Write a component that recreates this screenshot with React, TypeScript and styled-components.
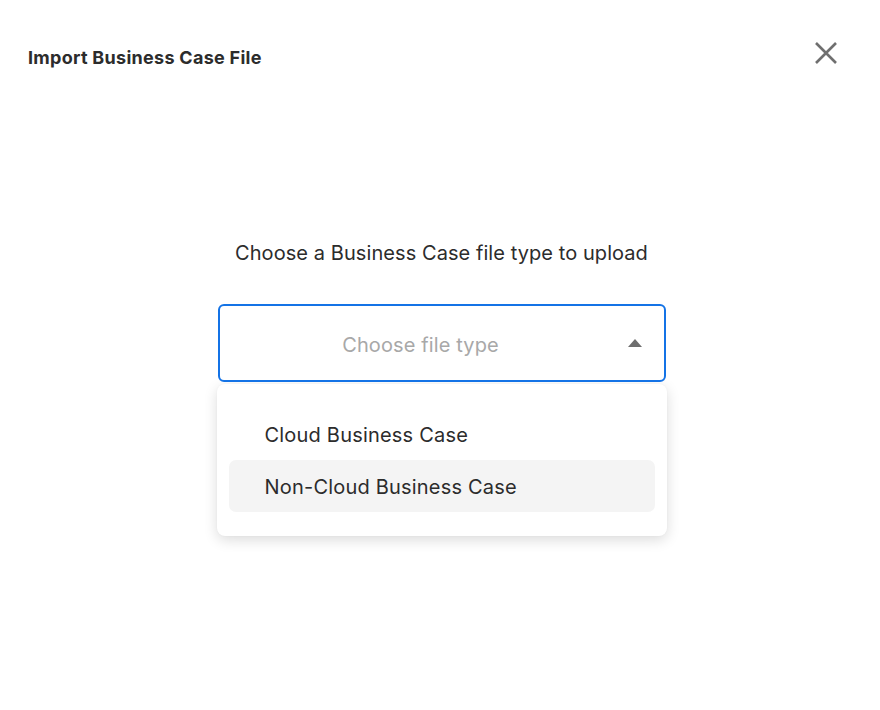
import React from "react";
import styled, { createGlobalStyle } from "styled-components";

const Global = createGlobalStyle`
  html, body {
    margin: 0;
    padding: 0;
    background: #ffffff;
  }
  body {
    font-family: Inter, "Noto Sans", sans-serif;
    color: #2c2c2c;
  }
`;

const Dialog = styled.div`
  width: 880px;
  height: 710px;
  box-sizing: border-box;
  display: flex;
  flex-direction: column;
  padding: 38px 40px 0 28px;
`;

const Header = styled.div`
  display: flex;
  align-items: center;
  justify-content: space-between;
  height: 38px;
`;

const Title = styled.h1`
  margin: 0;
  font-size: 18px;
  font-weight: 700;
  color: #2c2c2c;
  letter-spacing: 0.28px;
`;

const CloseButton = styled.button`
  border: none;
  background: none;
  padding: 0;
  width: 26px;
  height: 26px;
  display: flex;
  align-items: center;
  justify-content: center;
  cursor: pointer;
  margin-top: -8px;
  margin-right: 1px;
`;

const Body = styled.div`
  display: flex;
  flex-direction: column;
  align-items: center;
  padding-top: 163px;
  margin-left: 15px;
`;

const Prompt = styled.p`
  margin: 0;
  font-size: 20px;
  line-height: 28px;
  color: #2c2c2c;
  letter-spacing: 0.07px;
`;

const SelectWrap = styled.div`
  position: relative;
  margin-top: 37px;
  width: 450px;
`;

const SelectBox = styled.div`
  box-sizing: border-box;
  width: 448px;
  height: 78px;
  margin-left: 1px;
  border: 2px solid #1473e6;
  border-radius: 6px;
  display: flex;
  align-items: center;
  justify-content: center;
  position: relative;
  background: #fff;
`;

const Placeholder = styled.span`
  font-size: 20px;
  color: #a8a8a8;
  margin-left: -42px;
  padding-top: 3px;
  letter-spacing: 0.12px;
`;

const Caret = styled.span`
  position: absolute;
  right: 22px;
  top: 33px;
  width: 0;
  height: 0;
  border-left: 7px solid transparent;
  border-right: 7px solid transparent;
  border-bottom: 8px solid #6e6e6e;
`;

const Menu = styled.ul`
  list-style: none;
  margin: 2px 0 0 0;
  padding: 24px 12px 24px 12px;
  width: 450px;
  box-sizing: border-box;
  background: #fff;
  border-radius: 8px;
  box-shadow: 0 4px 14px rgba(0, 0, 0, 0.14), 0 0 2px rgba(0, 0, 0, 0.04);
`;

const Option = styled.li<{ $active?: boolean }>`
  box-sizing: border-box;
  height: 52px;
  display: flex;
  align-items: center;
  padding: 2px 0 0 36px;
  border-radius: 7px;
  font-size: 20px;
  color: #2c2c2c;
  letter-spacing: 0.2px;
  background: ${(p) => (p.$active ? "#f4f4f4" : "transparent")};
`;

export default function App() {
  return (
    <>
      <Global />
      <Dialog>
        <Header>
          <Title>Import Business Case File</Title>
          <CloseButton aria-label="Close">
            <svg width="24" height="24" viewBox="0 0 24 24">
              <path
                d="M2 2 L22 22 M22 2 L2 22"
                stroke="#6f6f6f"
                strokeWidth="2.6"
                strokeLinecap="butt"
                fill="none"
              />
            </svg>
          </CloseButton>
        </Header>
        <Body>
          <Prompt>Choose a Business Case file type to upload</Prompt>
          <SelectWrap>
            <SelectBox>
              <Placeholder>Choose file type</Placeholder>
              <Caret />
            </SelectBox>
            <Menu>
              <Option>Cloud Business Case</Option>
              <Option $active>Non-Cloud Business Case</Option>
            </Menu>
          </SelectWrap>
        </Body>
      </Dialog>
    </>
  );
}
